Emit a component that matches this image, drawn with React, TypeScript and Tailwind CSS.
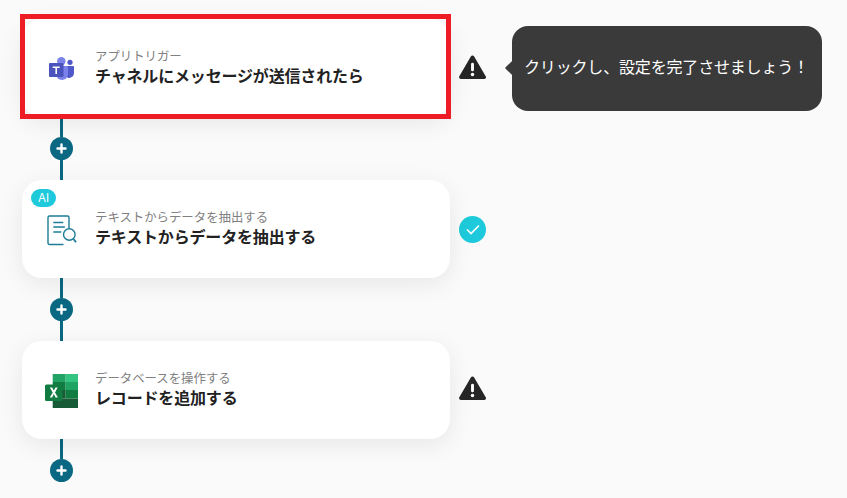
import type { ReactNode } from "react";

const FONT = "font-['Noto_Sans_CJK_JP','Liberation_Sans',sans-serif]";

function TeamsIcon() {
  return (
    <svg width="25" height="23" viewBox="0 0 25 23">
      <circle cx="21" cy="5.300" r="2.600" fill="#5059c9" />
      <path d="M17 9h7a1 1 0 0 1 1 1v6a5 5 0 0 1-5 5h-1l-2-2z" fill="#5059c9" />
      <circle cx="12.300" cy="4.300" r="4.200" fill="#7b83eb" />
      <path d="M7 9h11a1 1 0 0 1 1 1v7a6 6 0 0 1-12 0z" fill="#7b83eb" />
      <rect x="0" y="6" width="14.500" height="14" rx="1" fill="#4b53bc" />
      <path d="M3.700 9.500h7v1.500H8v6H6.400v-6H3.700z" fill="#fff" />
    </svg>
  );
}

function DocSearchIcon() {
  return (
    <svg width="30" height="31" viewBox="0 0 30 31" fill="none" stroke="#1d7c96" strokeWidth="1.400">
      <path d="M16.500 29.500H2.500A1.500 1.500 0 0 1 1 28V2.500A1.500 1.500 0 0 1 2.500 1h18A1.500 1.500 0 0 1 22 2.500v10.500" />
      <path d="M6.300 7.500h10M6.300 12h11.500M6.300 17h8" strokeWidth="1.600" />
      <circle cx="22.300" cy="19.500" r="5.800" />
      <path d="M26.500 24l2.500 3.200" strokeWidth="1.800" />
    </svg>
  );
}

function ExcelIcon() {
  return (
    <svg width="33" height="34" viewBox="0 0 33 34">
      <rect x="7.700" y="0" width="13" height="8" fill="#21a366" />
      <rect x="20.700" y="0" width="12.300" height="8" fill="#33c481" />
      <rect x="7.700" y="8" width="13" height="8" fill="#107c41" />
      <rect x="20.700" y="8" width="12.300" height="8" fill="#21a366" />
      <rect x="7.700" y="16" width="13" height="8.500" fill="#185c37" />
      <rect x="20.700" y="16" width="12.300" height="8.500" fill="#107c41" />
      <rect x="7.700" y="24.500" width="25.300" height="9.500" rx="0.500" fill="#185c37" />
      <rect x="0" y="10.500" width="17.500" height="16.500" rx="1.500" fill="#107c41" />
      <path d="M4.800 13.500h2.400l1.600 3.100 1.700-3.100h2.200l-2.700 4.900 2.900 5h-2.300L8.800 20l-1.700 3.400H4.800l2.900-5z" fill="#fff" />
    </svg>
  );
}

function WarningIcon() {
  return (
    <svg width="27" height="25" viewBox="0 0 28 26">
      <path
        d="M14 2.500 L26 23 H2 Z"
        fill="#262626"
        stroke="#262626"
        strokeWidth="4"
        strokeLinejoin="round"
      />
      <rect x="12.500" y="8" width="3" height="9" rx="1.500" fill="#fff" />
      <circle cx="14" cy="20.300" r="1.800" fill="#fff" />
    </svg>
  );
}

function CheckBadge() {
  return (
    <div className="flex h-[27px] w-[27px] items-center justify-center rounded-full bg-gradient-to-br from-[#1ecbd6] to-[#1ec8e0]">
      <svg width="14" height="11" viewBox="0 0 14 11" fill="none" stroke="#fff" strokeWidth="1.600">
        <path d="M1 5.500l4 4 8-8" />
      </svg>
    </div>
  );
}

function Connector({ last }: { last?: boolean }) {
  return (
    <div className="ml-[28px] flex h-[63px] w-[23px] flex-col items-center">
      <div className="h-[20px] w-[3px] bg-[#0b6882]" />
      <div className="flex h-[23px] w-[23px] shrink-0 items-center justify-center rounded-full bg-[#0b6882]">
        <svg width="11" height="11" viewBox="0 0 11 11" stroke="#fff" strokeWidth="2.400" strokeLinecap="round">
          <path d="M5.500 1.500v8M1.500 5.500h8" />
        </svg>
      </div>
      {!last && <div className="h-[20px] w-[3px] bg-[#0b6882]" />}
    </div>
  );
}

function StepCard(props: {
  icon: ReactNode;
  sub: string;
  title: string;
  iconClass: string;
  children?: ReactNode;
}) {
  return (
    <div className="relative flex h-[98px] w-[428px] shrink-0 rounded-[20px] bg-white shadow-[0_6px_24px_rgba(0,0,0,0.08)]">
      <div className={props.iconClass}>{props.icon}</div>
      <div className="absolute left-[73px] top-[27.500px] flex flex-col gap-[0.500px]">
        <p className="text-[12.400px] leading-[18px] text-[#808080]">{props.sub}</p>
        <p className="text-[16px] font-bold leading-[21px] tracking-[-0.170px] text-[#222]">{props.title}</p>
      </div>
      {props.children}
    </div>
  );
}

export default function App() {
  return (
    <div className={`${FONT} h-[498px] w-[847px] overflow-hidden bg-[#fafafa] pl-[22px] pt-[19px]`}>
      <div className="flex items-center">
        <StepCard
          icon={<TeamsIcon />}
          iconClass="absolute left-[27px] top-[38px]"
          sub="アプリトリガー"
          title="チャネルにメッセージが送信されたら"
        >
          <div className="absolute -left-[2px] -top-[5px] h-[105px] w-[431px] rounded-none border-[5px] border-[#ee1c25]" />
        </StepCard>
        <div className="ml-[9px] mt-[-2px]">
          <WarningIcon />
        </div>
        <div className="relative ml-[26px] flex h-[85px] w-[310px] rounded-[16px] bg-[#3a3a3a] pl-[12px] pt-[28px] text-[16px] leading-[24px] tracking-[-0.170px] text-white">
          <div className="absolute -left-[5px] top-[37px] h-[10px] w-[10px] rotate-45 rounded-[1px] bg-[#3a3a3a]" />
          クリックし、設定を完了させましょう！
        </div>
      </div>
      <Connector />
      <div className="flex items-center">
        <StepCard
          icon={<DocSearchIcon />}
          iconClass="absolute left-[25px] top-[35px]"
          sub="テキストからデータを抽出する"
          title="テキストからデータを抽出する"
        >
          <div className="absolute left-[9px] top-[9px] flex h-[18px] w-[25px] items-center justify-center rounded-full bg-gradient-to-r from-[#1ecbd6] to-[#1ec8e0] pt-[1px] font-['Inter',sans-serif] text-[11.500px] text-white">
            AI
          </div>
        </StepCard>
        <div className="ml-[9px]">
          <CheckBadge />
        </div>
      </div>
      <Connector />
      <div className="flex items-center">
        <StepCard
          icon={<ExcelIcon />}
          iconClass="absolute left-[23px] top-[33px]"
          sub="データベースを操作する"
          title="レコードを追加する"
        />
        <div className="ml-[9px] mt-[-3px]">
          <WarningIcon />
        </div>
      </div>
      <Connector last />
    </div>
  );
}
